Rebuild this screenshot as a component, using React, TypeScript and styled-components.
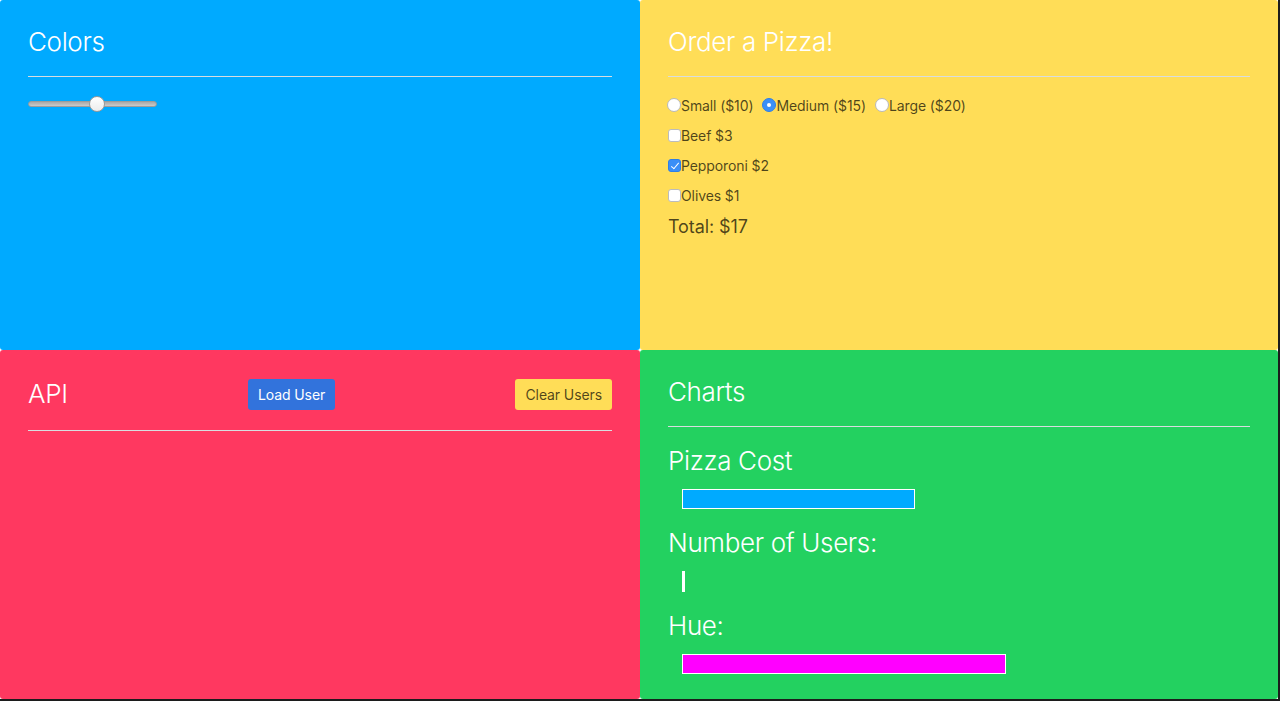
import React, { useState } from "react";
import styled, { createGlobalStyle } from "styled-components";

const Global = createGlobalStyle`
  html, body { margin: 0; padding: 0; background: #1c1c1c; }
  body { font-family: Inter, "Helvetica Neue", Arial, sans-serif; }
  * { box-sizing: border-box; }
`;

const Grid = styled.div`
  width: 1278px;
  height: 699px;
  display: grid;
  grid-template-columns: 640px 638px;
  grid-template-rows: 350px 349px;
  background: #ffffff;
`;

const Panel = styled.section<{ $bg: string }>`
  background: ${(p) => p.$bg};
  border-radius: 3px;
  padding: 24px 28px 0 28px;
  display: flex;
  flex-direction: column;
  overflow: hidden;
`;

const Title = styled.h2`
  margin: 0;
  font-family: Inter, "Helvetica Neue", Arial, sans-serif;
  font-weight: 300;
  font-size: 26px;
  line-height: 36px;
  color: #ffffff;
  letter-spacing: -0.35px;
`;

const HeaderRow = styled.div`
  display: flex;
  align-items: center;
  justify-content: space-between;
  height: 40px;
`;

const Divider = styled.hr`
  margin: 16px 0 0 0;
  border: none;
  height: 1px;
  background: #d8dde0;
  width: 100%;
`;

const Slider = styled.input`
  -webkit-appearance: none;
  appearance: none;
  width: 129px;
  height: 16px;
  margin: 19px 0 0 0;
  background: transparent;
  &::-webkit-slider-runnable-track {
    height: 6px;
    border-radius: 3px;
    background: linear-gradient(#a9a9a9, #cacaca);
    border: 1px solid #9c9c9c;
  }
  &::-webkit-slider-thumb {
    -webkit-appearance: none;
    width: 16px;
    height: 16px;
    border-radius: 50%;
    background: linear-gradient(#ffffff, #ececec);
    border: 1px solid #9a9a9a;
    margin-top: -6px;
  }
`;

const OptionRow = styled.div<{ $top: number }>`
  display: flex;
  align-items: center;
  height: 20px;
  margin-top: ${(p) => p.$top}px;
  font-size: 14px;
  color: rgba(0, 0, 0, 0.7);
`;

const OptionLabel = styled.label`
  display: inline-flex;
  align-items: center;
  margin-right: 10px;
  cursor: pointer;
  letter-spacing: -0.1px;
`;

const Radio = styled.input`
  -webkit-appearance: none;
  appearance: none;
  margin: 0 0 0 -1px;
  width: 14px;
  height: 14px;
  border-radius: 50%;
  background: #ffffff;
  border: 1px solid #b9b9b9;
  position: relative;
  &:checked {
    background: #3a8ff7;
    border-color: #2f7fe6;
  }
  &:checked::after {
    content: "";
    position: absolute;
    left: 4px;
    top: 4px;
    width: 4px;
    height: 4px;
    border-radius: 50%;
    background: #ffffff;
  }
`;

const Check = styled.input`
  -webkit-appearance: none;
  appearance: none;
  margin: 0;
  width: 13px;
  height: 13px;
  border-radius: 3px;
  background: #ffffff;
  border: 1px solid #bcbcbc;
  position: relative;
  &:checked {
    background: #3a8ff7;
    border-color: #2f7fe6;
  }
  &:checked::after {
    content: "";
    position: absolute;
    left: 3.5px;
    top: 1px;
    width: 3px;
    height: 7px;
    border: solid #ffffff;
    border-width: 0 1.5px 1.5px 0;
    transform: rotate(40deg);
  }
`;

const Total = styled.div`
  margin-top: 10px;
  font-size: 18px;
  line-height: 24px;
  color: rgba(0, 0, 0, 0.7);
  font-weight: 400;
  letter-spacing: -0.1px;
`;

const Button = styled.button<{ $kind: "link" | "warning" }>`
  height: 31px;
  padding: 0 10px;
  border: none;
  border-radius: 3px;
  font-family: Inter, "Helvetica Neue", Arial, sans-serif;
  font-size: 14px;
  letter-spacing: -0.1px;
  cursor: pointer;
  background: ${(p) => (p.$kind === "link" ? "#3273dc" : "#ffdd57")};
  color: ${(p) => (p.$kind === "link" ? "#ffffff" : "rgba(0,0,0,0.7)")};
`;

const ChartLabel = styled.div`
  margin-top: 16px;
  font-weight: 300;
  font-size: 26px;
  line-height: 36px;
  color: #ffffff;
  letter-spacing: -0.35px;
`;

const Bar = styled.div<{ $color: string; $h?: number }>`
  margin: 10px 0 0 14px;
  height: ${(p) => p.$h ?? 20}px;
  background: ${(p) => p.$color};
  border: 1px solid #ffffff;
`;

export default function App() {
  const [hue, setHue] = useState(54);
  const [size, setSize] = useState("medium");
  const [toppings, setToppings] = useState({ beef: false, pepperoni: true, olives: false });

  const sizes = [
    { id: "small", label: "Small ($10)" },
    { id: "medium", label: "Medium ($15)" },
    { id: "large", label: "Large ($20)" },
  ];
  const tops = [
    { id: "beef", label: "Beef $3" },
    { id: "pepperoni", label: "Pepporoni $2" },
    { id: "olives", label: "Olives $1" },
  ] as const;

  return (
    <>
      <Global />
      <Grid>
        <Panel $bg="#00aaff">
          <Title>Colors</Title>
          <Divider />
          <Slider
            type="range"
            min={0}
            max={100}
            value={hue}
            onChange={(e) => setHue(Number(e.target.value))}
          />
        </Panel>
        <Panel $bg="#ffdd57">
          <Title>Order a Pizza!</Title>
          <Divider />
          <OptionRow $top={18}>
            {sizes.map((s) => (
              <OptionLabel key={s.id}>
                <Radio
                  type="radio"
                  name="size"
                  checked={size === s.id}
                  onChange={() => setSize(s.id)}
                />
                {s.label}
              </OptionLabel>
            ))}
          </OptionRow>
          {tops.map((t) => (
            <OptionRow $top={10} key={t.id}>
              <OptionLabel>
                <Check
                  type="checkbox"
                  checked={toppings[t.id]}
                  onChange={() => setToppings({ ...toppings, [t.id]: !toppings[t.id] })}
                />
                {t.label}
              </OptionLabel>
            </OptionRow>
          ))}
          <Total>Total: $17</Total>
        </Panel>
        <Panel $bg="#ff3860">
          <HeaderRow>
            <Title>API</Title>
            <Button $kind="link">Load User</Button>
            <Button $kind="warning">Clear Users</Button>
          </HeaderRow>
          <Divider />
        </Panel>
        <Panel $bg="#23d160">
          <Title>Charts</Title>
          <Divider />
          <ChartLabel>Pizza Cost</ChartLabel>
          <Bar $color="#00aaff" style={{ width: 233 }} />
          <ChartLabel>Number of Users:</ChartLabel>
          <Bar $color="#ffffff" $h={21} style={{ width: 3 }} />
          <ChartLabel>Hue:</ChartLabel>
          <Bar $color="#ff00ff" style={{ width: 324 }} />
        </Panel>
      </Grid>
    </>
  );
}
